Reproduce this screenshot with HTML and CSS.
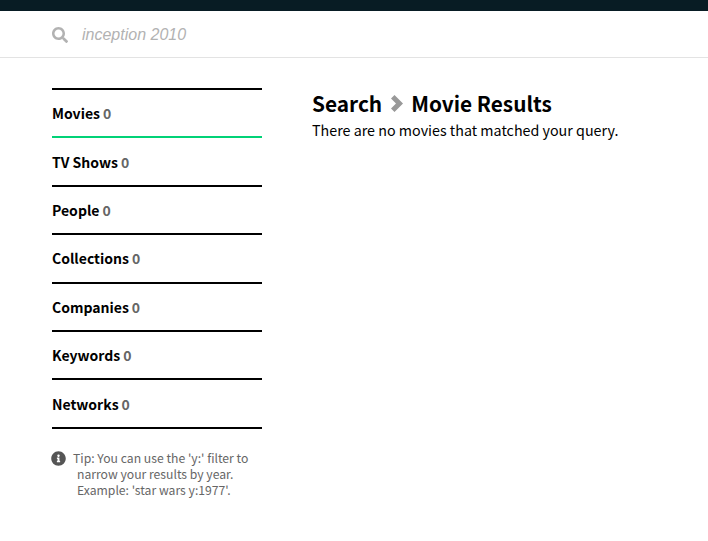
FILE: index.html
```html
<!DOCTYPE html>
<html lang="en">
<head>
<meta charset="utf-8">
<title>Search</title>
<link rel="stylesheet" href="styles.css">
</head>
<body>
<div class="topbar"></div>
<div class="searchbar">
  <svg class="search-icon" viewBox="0 0 512 512" aria-hidden="true"><path d="M505 442.700L405.300 343c-4.500-4.500-10.600-7-17-7H372c27.600-35.300 44-79.700 44-128C416 93.100 322.900 0 208 0S0 93.100 0 208s93.100 208 208 208c48.300 0 92.700-16.400 128-44v16.300c0 6.400 2.500 12.500 7 17l99.700 99.700c9.400 9.400 24.600 9.400 33.900 0l28.300-28.300c9.400-9.400 9.400-24.600.1-34zM208 336c-70.700 0-128-57.200-128-128 0-70.700 57.200-128 128-128 70.700 0 128 57.200 128 128 0 70.700-57.200 128-128 128z"/></svg>
  <span class="search-text">inception 2010</span>
</div>
<div class="content">
  <aside class="sidebar">
    <ul class="facets">
      <li class="facet active"><b>Movies</b> <span class="count">0</span></li>
      <li class="facet"><b>TV Shows</b> <span class="count">0</span></li>
      <li class="facet"><b>People</b> <span class="count">0</span></li>
      <li class="facet"><b>Collections</b> <span class="count">0</span></li>
      <li class="facet"><b>Companies</b> <span class="count">0</span></li>
      <li class="facet"><b>Keywords</b> <span class="count">0</span></li>
      <li class="facet"><b>Networks</b> <span class="count">0</span></li>
    </ul>
    <div class="tip">
      <svg class="tip-icon" viewBox="0 0 512 512" aria-hidden="true"><path d="M256 8C119 8 8 119 8 256s111 248 248 248 248-111 248-248S393 8 256 8zm0 110c23.200 0 42 18.800 42 42s-18.800 42-42 42-42-18.800-42-42 18.800-42 42-42zm56 254c0 6.600-5.400 12-12 12h-88c-6.600 0-12-5.400-12-12v-24c0-6.600 5.400-12 12-12h12v-64h-12c-6.600 0-12-5.400-12-12v-24c0-6.600 5.400-12 12-12h64c6.600 0 12 5.400 12 12v100h12c6.600 0 12 5.400 12 12v24z"/></svg>
      <p class="tip-text">Tip: You can use the 'y:' filter to<br><span class="tip-indent">narrow your results by year.</span><br><span class="tip-indent">Example: 'star wars y:1977'.</span></p>
    </div>
  </aside>
  <main class="results">
    <h2 class="crumbs">
      <span>Search</span>
      <svg class="chevron" viewBox="0 0 12 17" aria-hidden="true"><path d="M3.500 0 L12 8.500 L3.500 17 L0 13.500 L5 8.500 L0 3.500 Z"/></svg>
      <span>Movie Results</span>
    </h2>
    <p class="empty">There are no movies that matched your query.</p>
  </main>
</div>
</body>
</html>
```
FILE: styles.css
```css
* { box-sizing: border-box; }
html, body { margin: 0; padding: 0; background: #fff; }
body {
  font-family: "Noto Sans CJK SC", "Noto Sans", sans-serif;
  color: #000;
  overflow: hidden;
}
.topbar { height: 11px; background: #081c24; }
.searchbar {
  height: 47px;
  display: flex;
  align-items: center;
  padding: 2px 0 0 52px;
  border-bottom: 1px solid #e3e3e3;
}
.search-icon { width: 16px; height: 16px; fill: #b2b2b2; flex: none; margin-bottom: 1px; }
.search-text {
  margin-left: 14px;
  font-family: "Liberation Sans", Arial, sans-serif;
  font-style: italic;
  font-size: 16px;
  color: #b2b2b2;
}
.content {
  display: flex;
  padding: 30px 0 0 52px;
}
.sidebar { width: 210px; flex: none; }
.facets {
  list-style: none;
  margin: 0;
  padding: 0;
  border-top: 2px solid #000;
}
.facet {
  height: 48.4px;
  display: flex;
  align-items: center;
  gap: 3px;
  border-bottom: 2px solid #000;
  font-size: 14px;
  line-height: 1;
}
.facet b { font-weight: 700; }
.facet.active { border-bottom-color: #01d277; }
.count { font-weight: 700; color: #666; }
.tip {
  display: flex;
  margin-top: 21px;
  color: #666;
  font-size: 12.200px;
  line-height: 16.200px;
}
.tip-icon { width: 15px; height: 15px; margin: 1px 6px 0 -1px; fill: #555; flex: none; }
.tip-text { margin: 0 0 0 1px; white-space: nowrap; }
.tip-indent { margin-left: 4px; }
.results { margin-left: 50px; }
.crumbs {
  margin: 0;
  display: flex;
  align-items: center;
  gap: 8.500px;
  font-size: 20.800px;
  line-height: 30px;
  font-weight: 700;
}
.chevron { width: 12px; height: 17px; fill: #999; margin-top: 1px; }
.empty {
  margin: 1px 0 0;
  font-size: 14.300px;
  line-height: 22px;
  font-weight: 400;
}
```
